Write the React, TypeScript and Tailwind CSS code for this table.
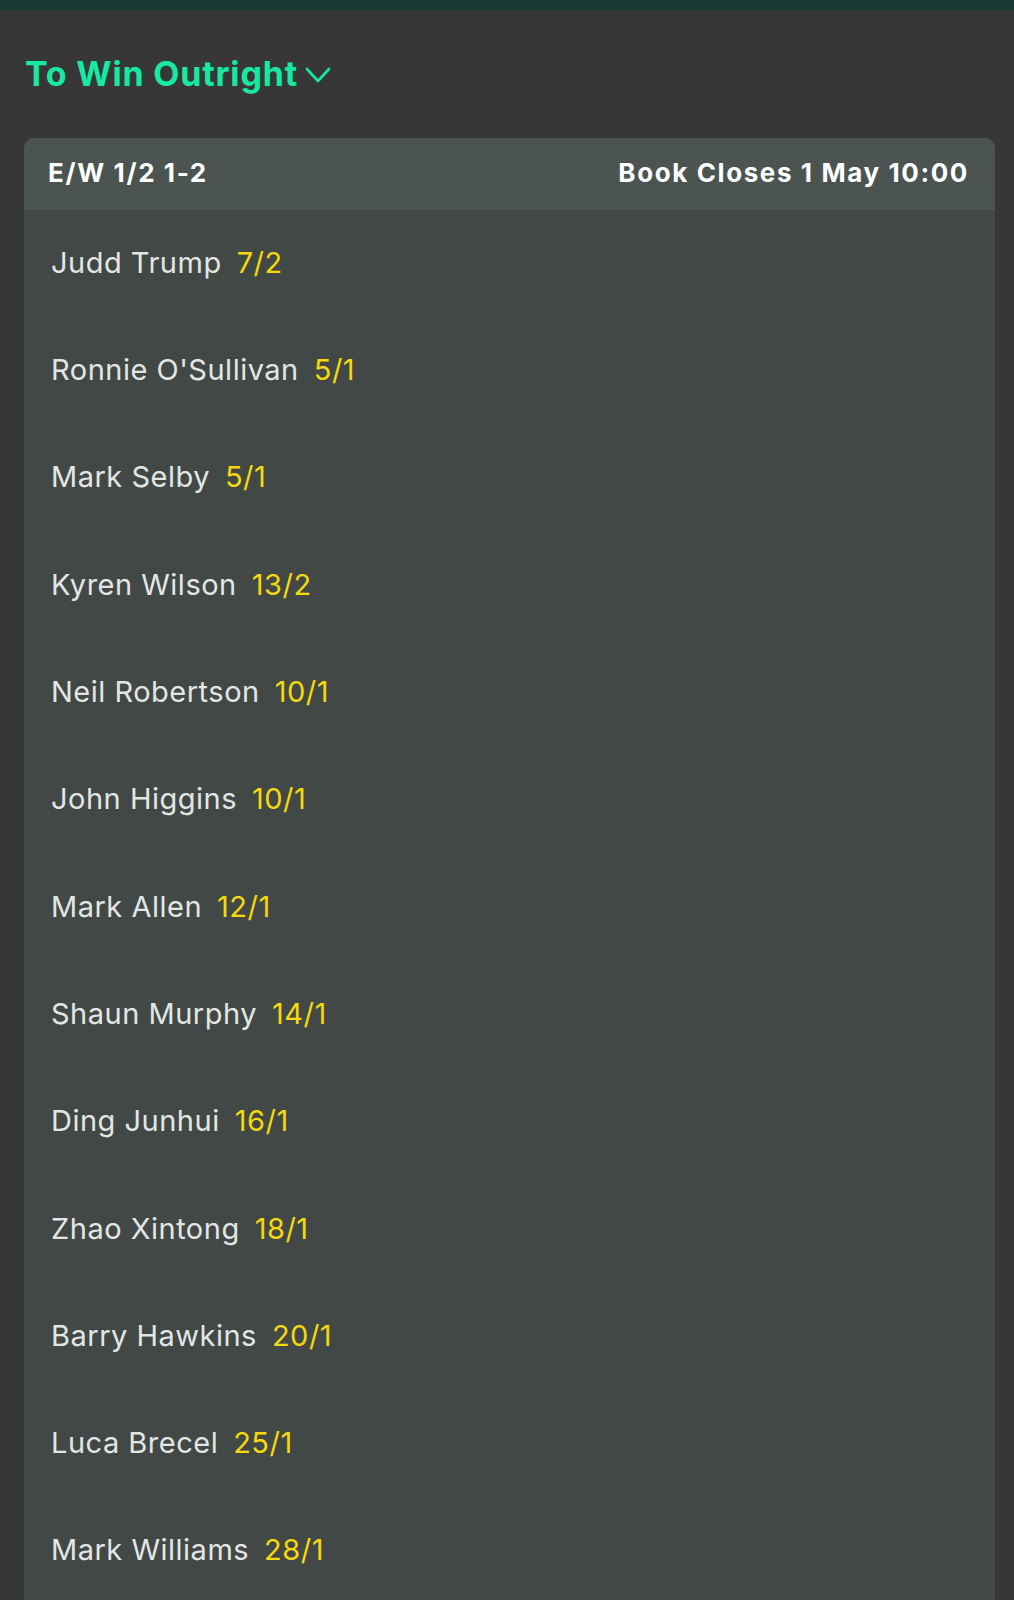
const runners = [
  { name: "Judd Trump", odds: "7/2" },
  { name: "Ronnie O'Sullivan", odds: "5/1" },
  { name: "Mark Selby", odds: "5/1" },
  { name: "Kyren Wilson", odds: "13/2" },
  { name: "Neil Robertson", odds: "10/1" },
  { name: "John Higgins", odds: "10/1" },
  { name: "Mark Allen", odds: "12/1" },
  { name: "Shaun Murphy", odds: "14/1" },
  { name: "Ding Junhui", odds: "16/1" },
  { name: "Zhao Xintong", odds: "18/1" },
  { name: "Barry Hawkins", odds: "20/1" },
  { name: "Luca Brecel", odds: "25/1" },
  { name: "Mark Williams", odds: "28/1" },
];

export default function App() {
  return (
    <main className="h-[1600px] overflow-hidden bg-[#373737] font-['Inter',sans-serif]">

      {/* TOP BAR */}
      <div className="h-[10px] bg-[#173b33]" />

      {/* MARKET TITLE */}
      <button className="flex items-center gap-[7px] pl-[25px] pb-[2px] h-[128px] text-[#16e9a2]">
        <span className="text-[34px] font-bold tracking-[0.8px]">
          To Win Outright
        </span>
        <svg
          width="26"
          height="17"
          viewBox="0 0 26 17"
          fill="none"
          stroke="currentColor"
          strokeWidth="2.6"
          strokeLinecap="round"
          strokeLinejoin="round"
          className="mt-[5px]"
        >
          <polyline points="2,2 13,14 24,2" />
        </svg>
      </button>

      {/* CARD */}
      <section className="ml-6 mr-[19px] rounded-t-[10px] overflow-hidden bg-[#414845]">

        <header className="h-[72px] flex items-center justify-between pl-6 pr-[26px] pb-[3px] bg-[#4c5451] text-white font-bold text-[26px] tracking-[1.6px]">
          <span>E/W 1/2 1-2</span>
          <span>Book Closes 1 May 10:00</span>
        </header>

        <ul>
          {runners.map((r) => (
            <li
              key={r.name}
              className="h-[107.3px] flex items-center gap-[15px] pl-[27px] pb-[2px] text-[29px] tracking-[0.5px]"
            >
              <span className="text-[#e4e6e5]">{r.name}</span>
              <span className="text-[#f6d80c]">{r.odds}</span>
            </li>
          ))}
        </ul>

      </section>

    </main>
  );
}
